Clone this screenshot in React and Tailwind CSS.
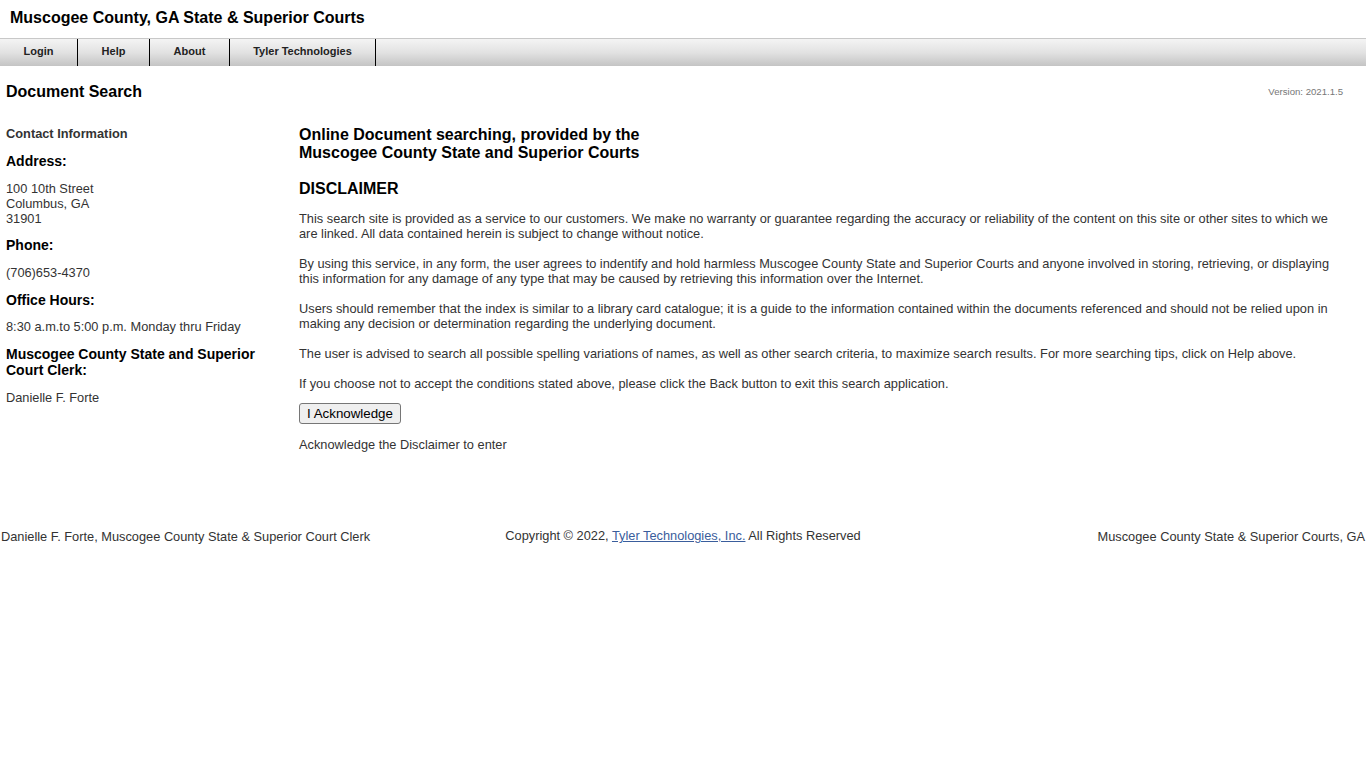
import React from 'react';

const NAV = [
  { label: 'Login', w: 'w-[78px]' },
  { label: 'Help', w: 'w-[72px]' },
  { label: 'About', w: 'w-[80px]' },
  { label: 'Tyler Technologies', w: 'w-[146px]' },
];

const PARAGRAPHS = [
  'This search site is provided as a service to our customers. We make no warranty or guarantee regarding the accuracy or reliability of the content on this site or other sites to which we are linked. All data contained herein is subject to change without notice.',
  'By using this service, in any form, the user agrees to indentify and hold harmless Muscogee County State and Superior Courts and anyone involved in storing, retrieving, or displaying this information for any damage of any type that may be caused by retrieving this information over the Internet.',
  'Users should remember that the index is similar to a library card catalogue; it is a guide to the information contained within the documents referenced and should not be relied upon in making any decision or determination regarding the underlying document.',
  'The user is advised to search all possible spelling variations of names, as well as other search criteria, to maximize search results. For more searching tips, click on Help above.',
  'If you choose not to accept the conditions stated above, please click the Back button to exit this search application.',
];

export default function App() {
  return (
    <div className="min-h-[768px] bg-white text-[#222] font-['Liberation_Sans',Arial,sans-serif]">
      {/* Header */}
      <div className="h-[38px] pl-[10px] pt-[9px]">
        <h1 className="text-[16px] leading-[18px] font-bold text-black">
          Muscogee County, GA State &amp; Superior Courts
        </h1>
      </div>

      {/* Nav bar */}
      <div className="h-[28px] flex border-t border-[#c8c8c8] bg-gradient-to-b from-[#f4f4f4] via-[#e2e2e2] to-[#c4c4c4]">
        {NAV.map((item) => (
          <div
            key={item.label}
            className={`${item.w} h-full flex items-center justify-center pb-[2px] border-r border-black text-[11px] font-bold text-[#222]`}
          >
            {item.label}
          </div>
        ))}
      </div>

      {/* Title row */}
      <div className="flex items-start justify-between pl-[6px] pr-[23px] pt-[17px]">
        <h2 className="text-[16px] leading-[18px] font-bold text-black">Document Search</h2>
        <span className="text-[9.6px] leading-[12px] text-[#777] mt-[3px]">Version: 2021.1.5</span>
      </div>

      {/* Body */}
      <div className="flex pt-[25px]">
        {/* Contact column */}
        <div className="w-[293px] shrink-0 pl-[6px] pr-[20px] text-[12.8px] leading-[15px] text-[#333]">
          <div className="text-[12.8px] font-bold text-[#333] leading-[15px]">Contact Information</div>
          <div className="mt-[13px] text-[14px] font-bold text-black">Address:</div>
          <div className="mt-[12px]">
            100 10th Street
            <br />
            Columbus, GA
            <br />
            31901
          </div>
          <div className="mt-[12px] text-[14px] font-bold text-black">Phone:</div>
          <div className="mt-[12px]">(706)653-4370</div>
          <div className="mt-[13px] text-[14px] font-bold text-black">Office Hours:</div>
          <div className="mt-[11px]">8:30 a.m.to 5:00 p.m. Monday thru Friday</div>
          <div className="mt-[12px] text-[14px] leading-[16px] font-bold text-black">
            Muscogee County State and Superior Court Clerk:
          </div>
          <div className="mt-[12px]">Danielle F. Forte</div>
        </div>

        {/* Main column */}
        <div className="flex-1 pl-[6px] pr-[26px] text-[12.8px] leading-[15px] text-[#333]">
          <h3 className="text-[16px] leading-[18px] font-bold text-black">
            Online Document searching, provided by the
            <br />
            Muscogee County State and Superior Courts
          </h3>
          <h3 className="mt-[18px] text-[16px] leading-[18px] font-bold text-black">DISCLAIMER</h3>
          <div className="mt-[13px]">
            {PARAGRAPHS.map((p, i) => (
              <p key={i} className="mb-[15px]">
                {p}
              </p>
            ))}
          </div>
          <button className="mt-[-7px] h-[21px] px-[7px] text-[13.33px] leading-[15px] text-black bg-[#efefef] border border-[#767676] rounded-[3px]">
            I Acknowledge
          </button>
          <p className="mt-[13px]">Acknowledge the Disclaimer to enter</p>
        </div>
      </div>

      {/* Footer */}
      <div className="mt-[76px] flex items-start text-[12.8px] leading-[15px] text-[#333] px-[1px]">
        <span className="flex-1 mt-[1px] text-left">
          Danielle F. Forte, Muscogee County State &amp; Superior Court Clerk
        </span>
        <span className="shrink-0">
          Copyright © 2022,{' '}
          <a href="#" className="text-[#3a5d9c] underline">Tyler Technologies, Inc.</a> All Rights Reserved
        </span>
        <span className="flex-1 mt-[1px] text-right">Muscogee County State &amp; Superior Courts, GA</span>
      </div>
    </div>
  );
}
